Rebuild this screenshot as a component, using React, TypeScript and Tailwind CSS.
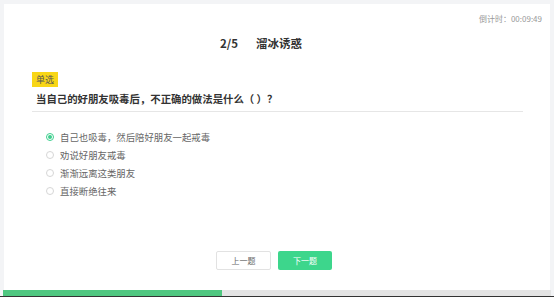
const options = [
  "自己也吸毒，然后陪好朋友一起戒毒",
  "劝说好朋友戒毒",
  "渐渐远离这类朋友",
  "直接断绝往来",
];

export default function App() {
  const selected = 0;
  return (
    <div className="flex h-[297px] w-[554px] flex-col overflow-hidden bg-[#f3f4f6] font-['Noto_Sans_CJK_SC',sans-serif]">
      <div className="mx-[4px] mt-[4px] flex flex-1 flex-col bg-white">
        <div className="pr-[8px] pt-[10px] text-right text-[8px] leading-[10px] text-[#999]">
          倒计时：00:09:49
        </div>
        <h1 className="mt-[11px] pr-[32px] text-center text-[11.5px] font-bold leading-[16px] text-[#333]">
          2/5<span className="inline-block w-[18px]" />溜冰诱惑
        </h1>

        <div className="ml-[28px] mr-[27px] mt-[13px]">
          <span className="inline-block h-[15px] bg-[#f8d616] px-[4px] text-[9px] leading-[15px] text-[#555]">
            单选
          </span>
          <p className="mt-[4px] border-b border-[#e6e6e6] pb-[5px] pl-[4px] text-[10.4px] font-bold leading-[14px] text-[#333]">
            当自己的好朋友吸毒后，不正确的做法是什么（ ）？
          </p>

          <ul className="mt-[16px] pl-[14px]">
            {options.map((o, i) => (
              <li key={o} className="flex h-[18px] items-center gap-[6px] text-[9.4px] text-[#666]">
                {i === selected ? (
                  <span className="flex size-[8px] items-center justify-center rounded-full border border-[#3ecf8e]">
                    <span className="size-[4px] rounded-full bg-[#3ecf8e]" />
                  </span>
                ) : (
                  <span className="size-[8px] rounded-full border border-[#d6d6d6]" />
                )}
                {o}
              </li>
            ))}
          </ul>
        </div>

        <div className="mt-auto flex justify-center gap-[7px] pb-[20px] pr-[6px]">
          <button className="h-[19px] w-[55px] rounded-[2px] border border-[#e2e2e2] bg-white text-[8px] text-[#666]">
            上一题
          </button>
          <button className="h-[19px] w-[54px] rounded-[2px] bg-[#3dd68c] text-[8px] text-white">
            下一题
          </button>
        </div>
      </div>

      <div className="mx-[3px] flex h-[6px] bg-[#e4e4e4]">
        <div className="w-[40%] bg-[#4fc780]" />
      </div>
      <div className="h-[1px] bg-[#333]" />
    </div>
  );
}
